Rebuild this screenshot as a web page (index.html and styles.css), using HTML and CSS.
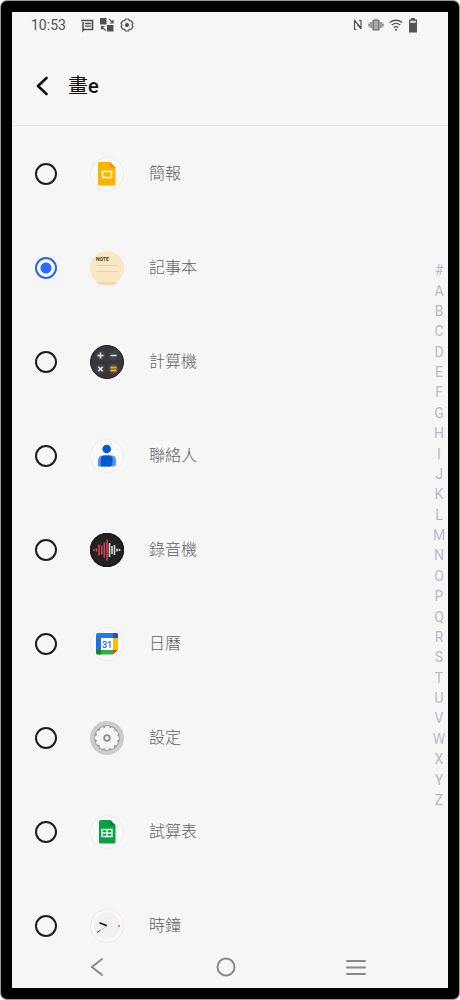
FILE: index.html
```
<!DOCTYPE html>
<html lang="zh-Hant">
<head>
    <meta charset="utf-8">
    <meta name="viewport" content="width=device-width, initial-scale=1">
    <title>畫e</title>
    <link rel="stylesheet" href="styles.css">
</head>
<body>
    <div class="phone">
        <div class="status-bar">
            <span class="time">10:53</span>
            <div class="status-icons">
                <svg width="14" height="16" viewBox="0 0 14 16" fill="none" stroke="#505050" stroke-width="1.6">
                    <path d="M1 3.5h11.5v9H4l-1 1V5"/>
                    <path d="M5 6.5h6M5 9.2h6" stroke-width="1.3"/>
                </svg>
                <svg width="14" height="16" viewBox="0 0 14 16" fill="#505050">
                    <path d="M0 1h6.500v6.500H0zM7 8h6.500v6.500H7z"/>
                    <path d="M9 2l3.500 3.500M13 3v3h-3M5.500 13.500L2 10M1.500 12.500v-3h3" fill="none" stroke="#505050" stroke-width="1.200"/>
                </svg>
                <svg width="14" height="16" viewBox="0 0 14 16" fill="none" stroke="#505050" stroke-width="1.2">
                    <path d="M5.500 2h3l.8 1.600 2 .2L13 6.300 12 8l1 1.700-1.700 2.500-2 .2-.8 1.600h-3l-.8-1.600-2-.2L1 9.700 2 8 1 6.300l1.700-2.500 2-.2z"/>
                    <circle cx="7" cy="8" r="1.500" fill="#505050"/>
                </svg>
            </div>
            <div class="system-icons">
                <svg width="10" height="16" viewBox="0 0 10 16" fill="none" stroke="#505050" stroke-width="1.2">
                    <path d="M3.500 12.500H1.500V3.500L8 11V3.500H6M1.500 3.500L5 7.500M8 11.500L4.500 8"/>
                </svg>
                <svg width="16" height="16" viewBox="0 0 16 16" fill="none" stroke="#606060">
                    <rect x="5" y="3" width="6" height="10" rx="1" fill="#aaa" stroke-width="1.200"/>
                    <path d="M3 5v6M13 5v6M1 6.500v3M15 6.500v3" stroke-width="1.200"/>
                </svg>
                <svg width="14" height="16" viewBox="0 0 14 16" fill="none" stroke="#505050" stroke-width="1.400">
                    <path d="M.8 5.500q6.200-4.600 12.400 0M2.800 8q4.200-3.200 8.400 0M4.700 10.500q2.300-1.800 4.600 0"/>
                    <circle cx="7" cy="12.700" r="1" fill="#505050" stroke="none"/>
                </svg>
                <svg width="10" height="16" viewBox="0 0 10 16">
                    <path d="M3 1h4v1.500h2V15.500H1V2.500h2z" fill="#555"/>
                    <path d="M2.200 3.800h5.600v2H2.200z" fill="#e8e8e8"/>
                </svg>
            </div>
        </div>

        <header class="header">
            <button class="back" aria-label="返回">
                <svg width="12" height="20" viewBox="0 0 12 20" fill="none" stroke="#111" stroke-width="2.600" stroke-linecap="round" stroke-linejoin="round">
                    <path d="M10.500 2L2 10l8.500 8"/>
                </svg>
            </button>
            <h1><span class="light">畫</span>e</h1>
        </header>

        <main class="content">
            <div class="app-list">
                <label class="app">
                    <input type="radio" name="app">
                    <svg class="app-icon" viewBox="0 0 34 34">
                        <circle cx="17" cy="17" r="16.500" fill="#f8f8f8" stroke="#ececec"/>
                        <path d="M9.500 5H20l5.500 5.500V27q0 1.500-1.500 1.500H9.500Q8 28.500 8 27V6.500Q8 5 9.500 5z" fill="#fbb404"/>
                        <path d="M20 5l5.500 5.500H20z" fill="#f29200"/>
                        <rect x="12.500" y="14.500" width="9" height="6" fill="none" stroke="#fff3cf" stroke-width="1.600"/>
                    </svg>
                    <span>簡報</span>
                </label>
                <label class="app">
                    <input type="radio" name="app" checked>
                    <svg class="app-icon" viewBox="0 0 34 34">
                        <circle cx="17" cy="17" r="17" fill="#fae8c4"/>
                        <path d="M6 31a17 17 0 0 0 22 0z" fill="#f6d3b8"/>
                        <path d="M6.500 14.500h21M6.500 20.500h21" stroke="#e3d0ae"/>
                        <text x="6" y="10" class="note-text">NOTE</text>
                    </svg>
                    <span>記事本</span>
                </label>
                <label class="app">
                    <input type="radio" name="app">
                    <svg class="app-icon" viewBox="0 0 34 34">
                        <circle cx="17" cy="17" r="16.500" fill="#36373b" stroke="#1d1e22"/>
                        <g fill="#424348">
                            <circle cx="10.500" cy="10.500" r="5"/>
                            <circle cx="23.500" cy="10.500" r="5"/>
                            <circle cx="10.500" cy="24" r="5"/>
                            <circle cx="23.500" cy="24" r="5" fill="#594a36"/>
                        </g>
                        <path d="M7.500 10.500h6M10.500 7.500v6M20.500 10.500h6M8.300 21.800l4.400 4.400M12.700 21.800l-4.400 4.400" stroke="#e6e6e6" stroke-width="1.600"/>
                        <path d="M20.500 22.500h6M20.500 25.500h6" stroke="#f3a72e" stroke-width="1.800"/>
                    </svg>
                    <span>計算機</span>
                </label>
                <label class="app">
                    <input type="radio" name="app">
                    <svg class="app-icon" viewBox="0 0 34 34">
                        <circle cx="17" cy="17" r="16.500" fill="#f8f8f8" stroke="#ececec"/>
                        <path d="M13 16.500h8q5 0 5 5v3.500q0 2.500-3 2.500H8V22q0-5.500 5-5.500z" fill="#5791f5"/>
                        <path d="M14.500 16.500h5q3 0 3 4v3q0 4-3 4H10.800V20.500q0-4 3.700-4z" fill="#0757cf"/>
                        <circle cx="16.700" cy="10" r="4.300" fill="#0757cf"/>
                    </svg>
                    <span>聯絡人</span>
                </label>
                <label class="app">
                    <input type="radio" name="app">
                    <svg class="app-icon" viewBox="0 0 34 34" fill="none" stroke-width="1.600">
                        <circle cx="17" cy="17" r="16.500" fill="#222" stroke="#191919"/>
                        <path d="M4 16v2M6.500 15.500v3M9 11.500v11M11.700 12.500v9M14.300 9.500v15M17 6.500v21" stroke="#db4254"/>
                        <path d="M19.500 10v14M22 13v8M24.500 12v10M27 15.500v3M29.500 16v2" stroke="#d8d8d8"/>
                    </svg>
                    <span>錄音機</span>
                </label>
                <label class="app">
                    <input type="radio" name="app">
                    <svg class="app-icon" viewBox="0 0 34 34">
                        <circle cx="17" cy="17" r="16.500" fill="#f8f8f8" stroke="#ececec"/>
                        <path d="M8 6h18q2 0 2 2v3H6V8q0-2 2-2z" fill="#267be5"/>
                        <path d="M6 11h5v12H6z" fill="#1f6fe0"/>
                        <path d="M23 6h3q2 0 2 2v3h-5z" fill="#1256b8"/>
                        <path d="M23 11h5v12h-5z" fill="#fbbc04"/>
                        <path d="M6 23h17v4.500H8q-2 0-2-2z" fill="#34a853"/>
                        <path d="M6 23h5v4.500H8q-2 0-2-2z" fill="#168038"/>
                        <path d="M23 23h5l-5 4.500z" fill="#e5412f"/>
                        <path d="M11 11h12v12H11z" fill="#fff"/>
                        <text x="17" y="20.500" class="date-text">31</text>
                    </svg>
                    <span>日曆</span>
                </label>
                <label class="app">
                    <input type="radio" name="app">
                    <svg class="app-icon" viewBox="0 0 34 34">
                        <circle cx="17" cy="17" r="17" fill="#ccc"/>
                        <circle cx="17" cy="17" r="12.800" fill="#9c9c9c"/>
                        <circle cx="17" cy="17" r="10" fill="#f5f5f5"/>
                        <circle cx="17" cy="17" r="9.500" fill="none" stroke="#f5f5f5" stroke-width="5" stroke-linecap="round" stroke-dasharray="0 4.974"/>
                        <circle cx="17" cy="17" r="2.800" fill="#f5f5f5" stroke="#8c8c8c" stroke-width="1.800"/>
                    </svg>
                    <span>設定</span>
                </label>
                <label class="app">
                    <input type="radio" name="app">
                    <svg class="app-icon" viewBox="0 0 34 34">
                        <circle cx="17" cy="17" r="16.500" fill="#f8f8f8" stroke="#ececec"/>
                        <path d="M10.500 5H20l5.500 5.500V27q0 1.500-1.500 1.500H10.500Q9 28.500 9 27V6.500Q9 5 10.500 5z" fill="#0b9f45"/>
                        <path d="M20 5l5.500 5.500H20z" fill="#0a7b36"/>
                        <path d="M12 14.500h10v7H12zM12 18h10M17 14.500v7" fill="none" stroke="#e9f7ee" stroke-width="1.400"/>
                    </svg>
                    <span>試算表</span>
                </label>
                <label class="app">
                    <input type="radio" name="app">
                    <svg class="app-icon" viewBox="0 0 34 34">
                        <circle cx="17" cy="17" r="16.500" fill="#f8f8f8" stroke="#ebebeb"/>
                        <circle cx="17" cy="17" r="13" fill="#f1f1f1"/>
                        <path d="M9.500 13.700l7.500 3" stroke="#111" stroke-width="1.500"/>
                        <path d="M16.500 17L10 22" stroke="#aaa" stroke-width=".7"/>
                        <path d="M10 21.500l-3 2" stroke="#333"/>
                        <circle cx="29" cy="17" r="1" fill="#ef4d50"/>
                    </svg>
                    <span>時鐘</span>
                </label>
            </div>
            <ol class="letters">
                <li>#</li>
                <li>A</li>
                <li>B</li>
                <li>C</li>
                <li>D</li>
                <li>E</li>
                <li>F</li>
                <li>G</li>
                <li>H</li>
                <li>I</li>
                <li>J</li>
                <li>K</li>
                <li>L</li>
                <li>M</li>
                <li>N</li>
                <li>O</li>
                <li>P</li>
                <li>Q</li>
                <li>R</li>
                <li>S</li>
                <li>T</li>
                <li>U</li>
                <li>V</li>
                <li>W</li>
                <li>X</li>
                <li>Y</li>
                <li>Z</li>
            </ol>
        </main>

        <nav class="nav-bar">
            <button aria-label="返回">
                <svg width="20" height="20" viewBox="0 0 20 20"><path d="M15 2L5 10l10 8"/></svg>
            </button>
            <button aria-label="主畫面">
                <svg width="20" height="20" viewBox="0 0 20 20"><circle cx="10" cy="10" r="8.500"/></svg>
            </button>
            <button aria-label="選單">
                <svg width="20" height="20" viewBox="0 0 20 20"><path d="M1 4h18M1 10.500h18M1 17h18"/></svg>
            </button>
        </nav>
    </div>
</body>
</html>
```
FILE: styles.css
```
* {
    box-sizing: border-box;
}
body {
    margin: 0;
    padding: 1px;
    background: #fff;
    font-family: Roboto, "Noto Sans CJK TC", sans-serif;
}
svg {
    display: block;
}
button {
    border: none;
    background: none;
    padding: 0;
    cursor: pointer;
}
.phone {
    display: flex;
    flex-direction: column;
    height: calc(100vh - 2px);
    border: 11px solid #000;
    border-radius: 6px;
    box-shadow: 0 0 0 1px #999;
    background: #f6f6f6;
}
.status-bar {
    display: flex;
    align-items: center;
    height: 26px;
    padding: 0 30px 0 19px;
}
.time {
    font-size: 14px;
    color: #505050;
}
.status-icons {
    display: flex;
    gap: 6px;
    margin-left: 14px;
}
.system-icons {
    display: flex;
    gap: 5px;
    margin-left: auto;
}
.header {
    display: flex;
    align-items: center;
    gap: 20px;
    height: 88px;
    padding: 8px 24px 0;
    border-bottom: 1px solid #e8e8e8;
}
.header h1 {
    margin: 0;
    font-size: 20px;
    line-height: 24px;
    font-weight: 500;
    color: #111;
}
.header .light {
    font-weight: 400;
}
.content {
    display: flex;
    flex: 1;
    min-height: 0;
    padding-top: 1px;
    overflow: hidden;
}
.app-list {
    flex: 1;
}
.app {
    display: flex;
    align-items: center;
    height: 94px;
    padding-left: 23px;
    font-size: 16px;
    line-height: 22px;
    font-weight: 300;
    color: #5c6166;
    cursor: pointer;
}
.app input {
    appearance: none;
    width: 22px;
    height: 22px;
    margin: 0;
    border: 2px solid #171e27;
    border-radius: 50%;
}
.app input:checked {
    border-color: #2d64e6;
    background: radial-gradient(circle, #2d69f6 5px, transparent 6px);
}
.app-icon {
    width: 34px;
    height: 34px;
    margin: 0 25px 0 33px;
}
.note-text {
    font-size: 5px;
    font-weight: 700;
    fill: #43392c;
}
.date-text {
    font-size: 9px;
    font-weight: 500;
    text-anchor: middle;
    fill: #246bd0;
}
.letters {
    display: flex;
    flex-direction: column;
    width: 18px;
    margin: 0;
    padding: 133px 0 136px;
    list-style: none;
    text-align: center;
    font-size: 14px;
    color: #b7bcca;
}
.letters li {
    display: flex;
    flex: 1;
    align-items: center;
    justify-content: center;
    min-height: 0;
}
.nav-bar {
    display: grid;
    grid-template-columns: repeat(3, 1fr);
    justify-items: center;
    align-items: center;
    height: 42px;
    padding: 0 27px 0 20px;
}
.nav-bar svg {
    fill: none;
    stroke: #888;
    stroke-width: 2;
    stroke-linecap: round;
}
```
